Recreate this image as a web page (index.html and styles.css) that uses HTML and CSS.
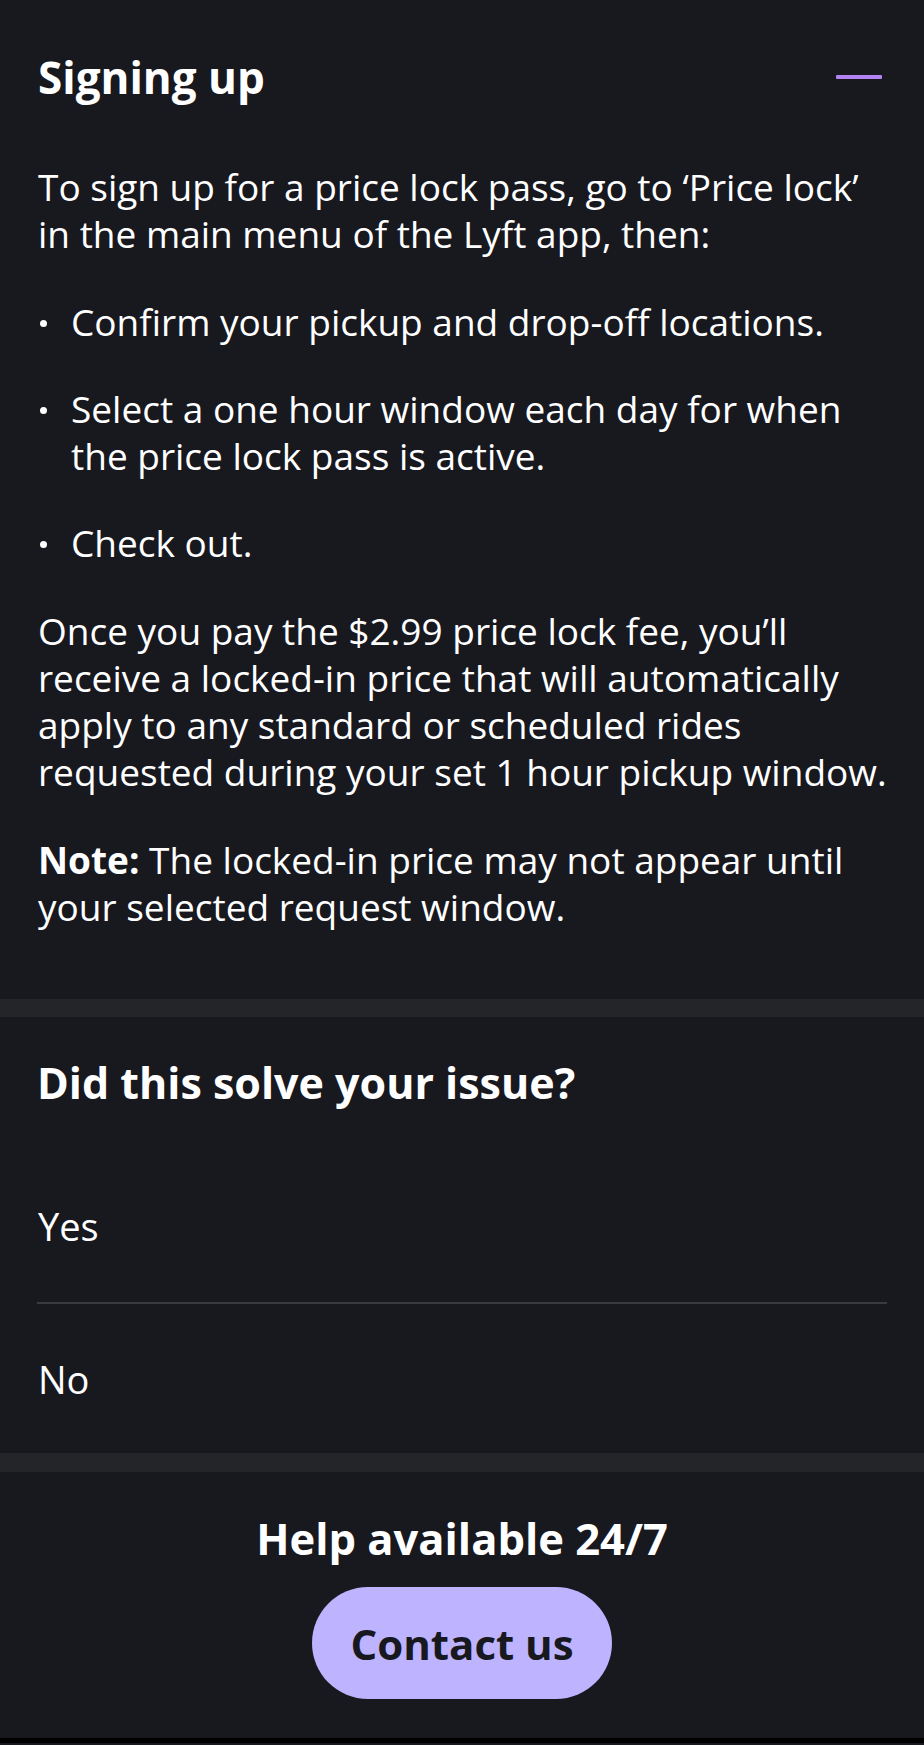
FILE: index.html
```html
<!DOCTYPE html>
<html lang="en">
<head>
<meta charset="utf-8">
<title>Signing up</title>
<link rel="stylesheet" href="styles.css">
</head>
<body>
<main class="page">
  <section class="faq">
    <div class="faq-head">
      <h2 class="faq-title">Signing up</h2>
      <span class="minus" aria-hidden="true"></span>
    </div>
    <div class="faq-body">
      <p class="para para-first">To sign up for a price lock pass, go to ‘Price lock’ in the main menu of the Lyft app, then:</p>
      <ul class="steps">
        <li class="step"><span class="step-text">Confirm your pickup and drop-off locations.</span></li>
        <li class="step"><span class="step-text">Select a one hour window each day for when the price lock pass is active.</span></li>
        <li class="step"><span class="step-text">Check out.</span></li>
      </ul>
      <p class="para">Once you pay the $2.99 price lock fee, you’ll receive a locked-in price that will automatically apply to any standard or scheduled rides requested during your set 1 hour pickup window.</p>
      <p class="para para-last"><strong>Note:</strong> The locked-in price may not appear until your selected request window.</p>
    </div>
  </section>
  <div class="band"></div>
  <section class="feedback">
    <h2 class="feedback-title">Did this solve your issue?</h2>
    <div class="option">Yes</div>
    <div class="option">No</div>
  </section>
  <div class="band band-2"></div>
  <section class="help">
    <h2 class="help-title">Help available 24/7</h2>
    <button class="contact" type="button">Contact us</button>
  </section>
  <div class="bottom-strip"></div>
</main>
</body>
</html>
```
FILE: styles.css
```css
* { box-sizing: border-box; }
html, body {
  margin: 0;
  padding: 0;
  background: #18181f;
}
body {
  font-family: "Open Sans", "Liberation Sans", sans-serif;
  color: #ffffff;
  width: 924px;
  min-height: 1745px;
}
.page {
  display: flex;
  flex-direction: column;
}
.faq {
  padding: 49px 37px 69px 38px;
}
.faq-head {
  display: flex;
  justify-content: space-between;
  align-items: center;
  height: 56px;
}
.faq-title {
  margin: 0;
  font-size: 44px;
  line-height: 56px;
  font-weight: 700;
}
.minus {
  width: 46px;
  height: 4px;
  border-radius: 1px;
  background: #b383f2;
  margin-right: 5px;
}
.faq-body {
  margin-top: 58px;
  font-size: 37px;
  line-height: 47px;
}
.para {
  margin: 0 0 41px;
}
.para-first { margin-bottom: 41px; }
.para-last { margin-bottom: 0; }
.para strong { font-weight: 700; }
.steps {
  list-style: none;
  margin: 0 0 41px;
  padding: 0;
}
.step {
  display: flex;
  margin-bottom: 40px;
}
.step:last-child { margin-bottom: 0; }
.step::before {
  content: "";
  flex: none;
  width: 7px;
  height: 7px;
  border-radius: 50%;
  background: #ffffff;
  margin: 22px 24px 0 2px;
}
.band {
  height: 18px;
  background: #242529;
}
.band-2 { height: 19px; }
.feedback {
  padding: 40px 37px 0;
}
.feedback-title {
  margin: 0 0 41px;
  font-size: 43px;
  line-height: 52px;
  font-weight: 700;
}
.option {
  height: 152px;
  display: flex;
  align-items: center;
  font-size: 38px;
  padding-left: 1px;
}
.option + .option {
  border-top: 2px solid #3a3b41;
  height: 151px;
}
.help {
  display: flex;
  flex-direction: column;
  align-items: center;
  padding: 41px 0 39px;
}
.help-title {
  margin: 0;
  font-size: 43.5px;
  line-height: 52px;
  font-weight: 700;
}
.contact {
  margin-top: 22px;
  width: 300px;
  height: 112px;
  border: 0;
  border-radius: 56px;
  background: #bdb3ff;
  color: #18181f;
  font-family: "Open Sans", "Liberation Sans", sans-serif;
  font-size: 42px;
  font-weight: 700;
  cursor: pointer;
}
.bottom-strip {
  height: 5px;
  background: #000000;
}
```
